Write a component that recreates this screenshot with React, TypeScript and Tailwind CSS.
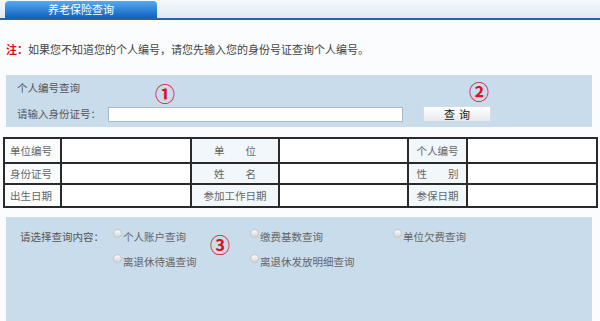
import React from 'react';

const font = { fontFamily: '"Noto Sans CJK SC", "Noto Sans", sans-serif' };

const Radio = ({ label }: { label: string }) => (
  <label className="flex items-start gap-[1px] text-[10.5px] leading-[14px] text-[#666] whitespace-nowrap">
    <span className="mt-[-1px] w-[9px] h-[9px] rounded-full border border-[#c4c4c4] bg-gradient-to-b from-[#fafafa] to-[#d6d6d6]" />
    <span>{label}</span>
  </label>
);

const Mark = ({ n, className }: { n: string; className: string }) => (
  <span className={`absolute text-[20px] font-bold leading-none text-[#d9121c] ${className}`}>{n}</span>
);

export default function App() {
  const rows = [
    ['单位编号', '单　　位', '个人编号'],
    ['身份证号', '姓　　名', '性　　别'],
    ['出生日期', '参加工作日期', '参保日期'],
  ];
  const heights = ['h-[25px]', 'h-[21px]', 'h-[23px]'];

  return (
    <div className="relative w-[600px] h-[321px] overflow-hidden bg-[#fafcfd]" style={font}>
      {/* 标签栏 */}
      <div className="h-[20px] flex items-end pl-[5px] bg-gradient-to-b from-[#f6f9fc] to-[#dfe9f2] border-b-2 border-[#2a63a2]">
        <div className="w-[152px] h-[17px] rounded-t-[4px] bg-gradient-to-b from-[#55aaee] to-[#0a62c0] text-white text-[11px] leading-[17px] text-center">
          养老保险查询
        </div>
      </div>

      {/* 提示 */}
      <div className="pt-[22px] px-[6px] text-[11px] leading-[14px] text-[#444] whitespace-nowrap">
        <span className="font-bold text-[#d01010]">注：</span>
        如果您不知道您的个人编号，请您先输入您的身份号证查询个人编号。
      </div>

      {/* 个人编号查询 */}
      <div className="mt-[19px] mx-[6px] w-[586px] h-[52px] bg-[#c9dcec] px-[11px] pt-[6px] text-[10.5px] leading-[14px] text-[#555] whitespace-nowrap">
        <div>个人编号查询</div>
        <div className="mt-[11px] flex items-center">
          <span className="w-[91px]">请输入身份证号：</span>
          <input className="w-[295px] h-[15px] bg-white border border-[#a9b9c8] outline-none" />
          <button className="ml-[20px] w-[68px] h-[16px] bg-gradient-to-b from-white to-[#e6e9ec] border border-[#d4dde6] text-[11px] leading-[14px] text-[#222] tracking-[4px] pl-[4px]">
            查询
          </button>
        </div>
      </div>

      {/* 信息表 */}
      <table className="mt-[10px] ml-[3px] w-[593px] table-fixed border-collapse border-2 border-[#222] text-[10.5px] text-[#666]">
        <colgroup>
          <col className="w-[57px]" />
          <col className="w-[130px]" />
          <col className="w-[88px]" />
          <col className="w-[129px]" />
          <col className="w-[59px]" />
          <col className="w-[130px]" />
        </colgroup>
        <tbody>
          {rows.map((r, i) => (
            <tr key={i} className={heights[i]}>
              <td className="border-2 border-[#2a2a2a] pl-[5px] p-0 leading-[14px] whitespace-nowrap">{r[0]}</td>
              <td className="border-2 border-[#2a2a2a] bg-white" />
              <td className="border-2 border-[#2a2a2a] bg-[#f1f7fa] text-center leading-[14px] whitespace-nowrap">{r[1]}</td>
              <td className="border-2 border-[#2a2a2a] bg-white" />
              <td className="border-2 border-[#2a2a2a] bg-[#f1f7fa] text-center leading-[14px] whitespace-nowrap">{r[2]}</td>
              <td className="border-2 border-[#2a2a2a] bg-white" />
            </tr>
          ))}
        </tbody>
      </table>

      {/* 查询内容 */}
      <div className="mt-[9px] mx-[6px] w-[586px] h-[120px] bg-[#c9dcec] pl-[14px] pt-[13px] flex items-start text-[10.5px] leading-[14px] text-[#555] whitespace-nowrap">
        <div className="w-[93px]">请选择查询内容：</div>
        <div className="grid grid-cols-[137px_143px_120px] gap-y-[11px]">
          <Radio label="个人账户查询" />
          <Radio label="缴费基数查询" />
          <Radio label="单位欠费查询" />
          <Radio label="离退休待遇查询" />
          <Radio label="离退休发放明细查询" />
        </div>
      </div>

      <Mark n="①" className="left-[155px] top-[84px]" />
      <Mark n="②" className="left-[469px] top-[82px]" />
      <Mark n="③" className="left-[210px] top-[235px]" />
    </div>
  );
}
